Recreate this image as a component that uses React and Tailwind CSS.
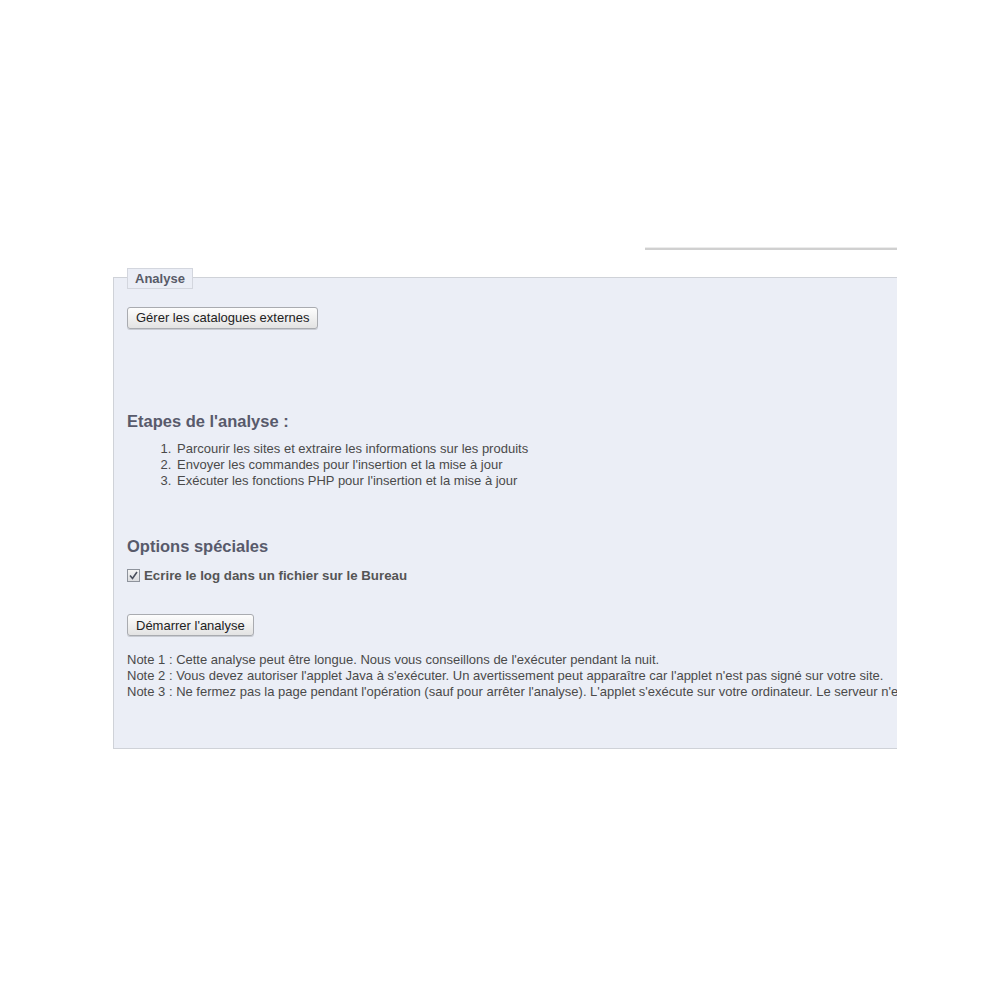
import React from 'react';

const steps = [
  'Parcourir les sites et extraire les informations sur les produits',
  "Envoyer les commandes pour l'insertion et la mise à jour",
  "Exécuter les fonctions PHP pour l'insertion et la mise à jour",
];

const notes = [
  "Note 1 : Cette analyse peut être longue. Nous vous conseillons de l'exécuter pendant la nuit.",
  "Note 2 : Vous devez autoriser l'applet Java à s'exécuter. Un avertissement peut apparaître car l'applet n'est pas signé sur votre site.",
  "Note 3 : Ne fermez pas la page pendant l'opération (sauf pour arrêter l'analyse). L'applet s'exécute sur votre ordinateur. Le serveur n'est pas sollicité.",
];

const Button = ({ children }) => (
  <button className="h-[22px] px-[8px] text-[13px] leading-none text-[#222] border border-[#a9abb0] rounded-[3px] bg-gradient-to-b from-[#fdfdfd] to-[#e3e3e3] shadow-[0_1px_0_#c9ccd3]">
    {children}
  </button>
);

const App = () => {
  return (
    <div className="w-[1000px] h-[1000px] bg-white font-['Liberation_Sans',Arial,sans-serif] pt-[247px]">
      {/* top line */}
      <div className="ml-[645px] w-[252px] h-[3px] bg-[#ececec] border-b-2 border-[#d0d0d0]" />

      <div className="relative ml-[113px] mt-[27px] w-[784px] h-[472px] bg-[#ebeef6] border-l border-t border-b border-[#cfd2d8]">
        {/* legend */}
        <div className="absolute left-[13px] top-[-10px] h-[21px] px-[7px] flex items-center bg-[#ebeef6] border border-[#d3d6de] text-[13px] font-bold text-[#585b68]">
          Analyse
        </div>

        <div className="overflow-hidden h-full pl-[13px] pt-[27px]">
          <Button>Gérer les catalogues externes</Button>

          <h3 className="mt-[82px] text-[16.5px] font-bold text-[#585a6b] leading-[20px]">
            Etapes de l'analyse :
          </h3>
          <ol className="mt-[10px] pl-[48px] list-decimal text-[13px] leading-[16px] text-[#4a4a4a]">
            {steps.map((s) => (
              <li key={s} className="pl-[2px]">{s}</li>
            ))}
          </ol>

          <h3 className="mt-[47px] text-[16.5px] font-bold text-[#585a6b] leading-[20px]">
            Options spéciales
          </h3>
          <label className="mt-[10px] flex items-center gap-[4px] text-[13.3px] font-bold text-[#555]">
            <span className="w-[13px] h-[13px] flex items-center justify-center border border-[#8e939c] bg-gradient-to-b from-[#f4f4f4] to-[#dcdde0]">
              <svg width="9" height="9" viewBox="0 0 9 9">
                <path d="M1 4.5 L3.5 7.5 L8 1" fill="none" stroke="#4a4f5c" strokeWidth="1.6" />
              </svg>
            </span>
            Ecrire le log dans un fichier sur le Bureau
          </label>

          <div className="mt-[27px]">
            <Button>Démarrer l'analyse</Button>
          </div>

          <div className="mt-[15px] text-[13px] leading-[16px] text-[#4a4a4a] whitespace-nowrap">
            {notes.map((n) => (
              <div key={n}>{n}</div>
            ))}
          </div>
        </div>
      </div>
    </div>
  );
};

export default App;
